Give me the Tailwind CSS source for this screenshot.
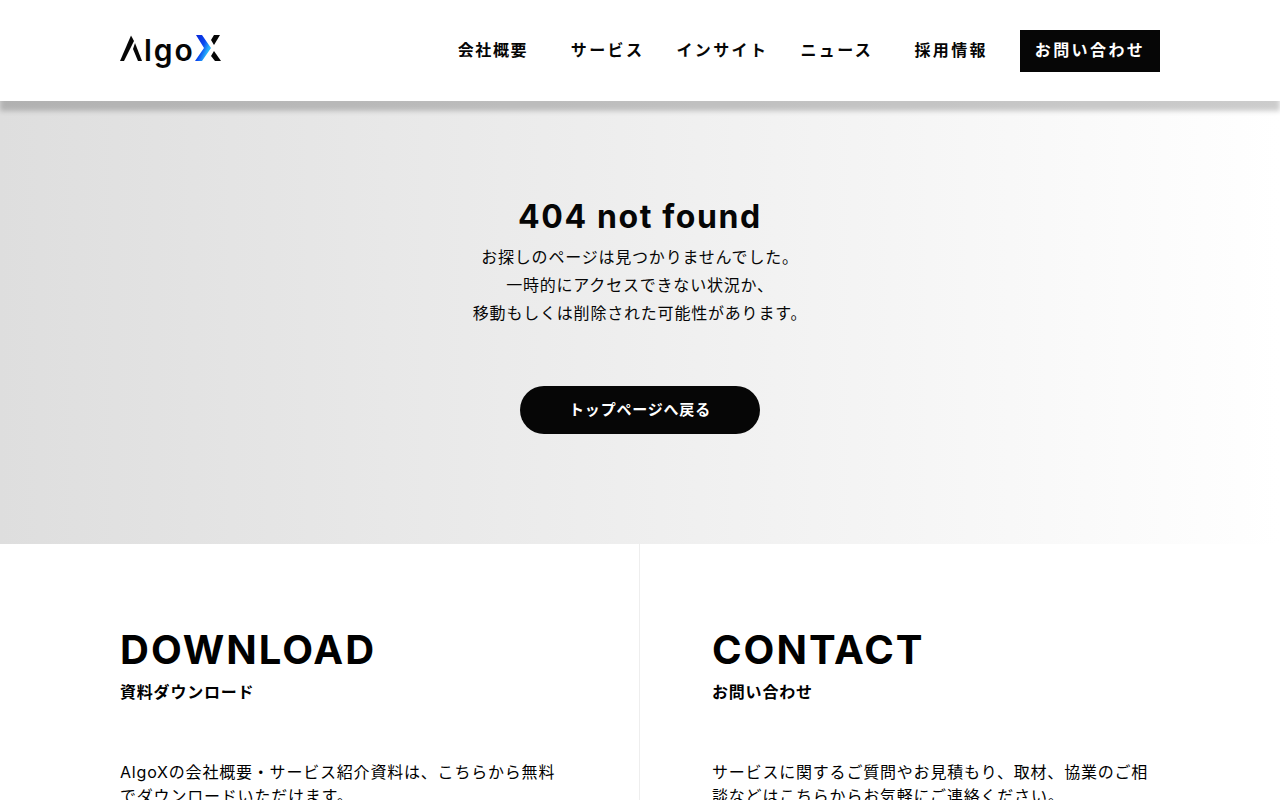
<!DOCTYPE html>
<html lang="ja">
<head>
  <meta charset="UTF-8">
  <meta name="viewport" content="width=device-width, initial-scale=1.0">
  <title>404 not found | AlgoX</title>
  <script src="https://cdn.jsdelivr.net/npm/@tailwindcss/browser@4"></script>
</head>
<body class="bg-white text-[#060606] font-['Inter','Noto_Sans_CJK_JP',sans-serif] tracking-wider">

  <!-- Header -->
  <header class="relative z-10 bg-white h-[101px] px-[120px] flex items-center justify-between shadow-[0_10px_5px_rgba(0,0,0,0.2)]">
    <a href="/" aria-label="AlgoX">
      <svg class="w-[102px] h-9" viewBox="0 -2 102 36" fill="none">
        <defs>
          <linearGradient id="logoBlue" x1="76" y1="2" x2="91" y2="8" gradientUnits="userSpaceOnUse">
            <stop offset="0" stop-color="#0a28d8" />
            <stop offset="0.6" stop-color="#0a48f0" />
            <stop offset="1" stop-color="#28b4fa" />
          </linearGradient>
        </defs>
        <path d="M0 26L11 .5L14 6L4 26Z" fill="#060606" />
        <path d="M13 14L15 8L22 26H18Z" fill="#060606" />
        <text x="24" y="26" font-family="Inter" font-weight="600" font-size="30" letter-spacing="2" fill="#060606">lgo</text>
        <path d="M76 0H82L91 13L82 26H75L84 13Z" fill="url(#logoBlue)" />
        <path d="M94 0H100L94 10L91 5Z" fill="#060606" />
        <path d="M94 16L101 26H95L91 21Z" fill="#060606" />
      </svg>
    </a>
    <nav class="flex items-start gap-8 font-bold leading-10 tracking-[0.15em] whitespace-nowrap">
      <a href="/company" class="w-[81px] tracking-widest">会社概要</a>
      <a href="/service">サービス</a>
      <a href="/insight">インサイト</a>
      <a href="/news" class="w-[82px]">ニュース</a>
      <a href="/recruit">採用情報</a>
      <a href="/contact" class="w-[140px] h-[42px] text-center bg-[#060606] text-white">お問い合わせ</a>
    </nav>
  </header>

  <!-- 404 message -->
  <main class="bg-[linear-gradient(90deg,#dedede,#ffffff)] pt-24 pb-[110px] flex flex-col items-center text-center">
    <h1 class="text-[32px] leading-10 font-bold tracking-wider">404 not found</h1>
    <p class="mt-1.5 leading-7">
      お探しのページは見つかりませんでした。<br>
      一時的にアクセスできない状況か、<br>
      移動もしくは削除された可能性があります。
    </p>
    <a href="/" class="mt-[59px] w-60 h-12 rounded-full flex items-center justify-center bg-[#060606] text-white text-[15px] font-bold">トップページへ戻る</a>
  </main>

  <!-- Download / Contact -->
  <section class="grid grid-cols-2 text-black">
    <a href="/download" class="block border-r border-[#eeeeee] pt-20 pb-20 pl-[120px] pr-20">
      <h2 class="text-[40px] leading-[52px] font-bold tracking-wider">DOWNLOAD</h2>
      <p class="mt-1 font-bold">資料ダウンロード</p>
      <p class="mt-14">AlgoXの会社概要・サービス紹介資料は、こちらから無料でダウンロードいただけます。</p>
    </a>
    <a href="/contact" class="block pt-20 pb-20 pl-[72px] pr-[120px]">
      <h2 class="text-[40px] leading-[52px] font-bold tracking-wider">CONTACT</h2>
      <p class="mt-1 font-bold">お問い合わせ</p>
      <p class="mt-14">サービスに関するご質問やお見積もり、取材、協業のご相談などはこちらからお気軽にご連絡ください。</p>
    </a>
  </section>

</body>
</html>
